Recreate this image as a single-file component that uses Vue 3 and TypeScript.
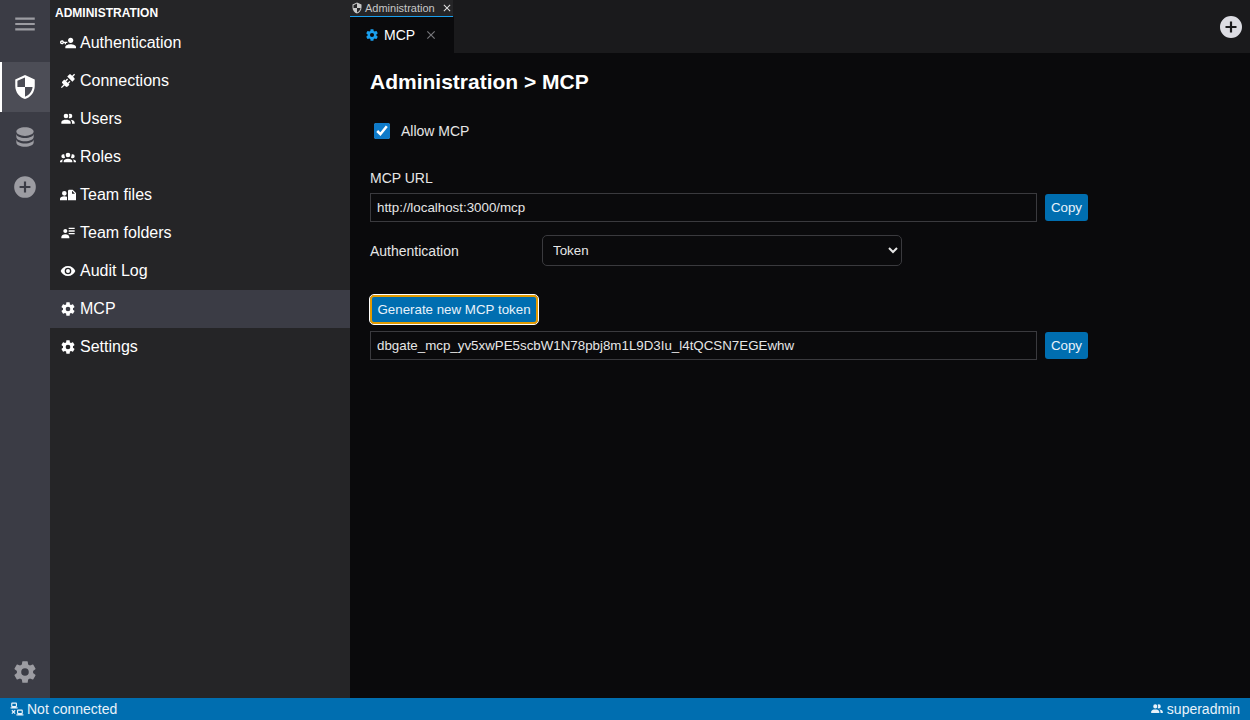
<script setup lang="ts">
const icons: Record<string, string> = {
  menu: 'M3,6H21V8H3V6M3,11H21V13H3V11M3,16H21V18H3V16Z',
  security: 'M12,12H19C18.47,16.11 15.72,19.78 12,20.92V12H5V6.3L12,3.19M12,1L3,5V11C3,16.55 6.84,21.73 12,23C17.16,21.73 21,16.55 21,11V5L12,1Z',
  database: 'M12,3C7.58,3 4,4.79 4,7C4,9.21 7.58,11 12,11C16.42,11 20,9.21 20,7C20,4.79 16.42,3 12,3M4,9V12C4,14.21 7.58,16 12,16C16.42,16 20,14.21 20,12V9C20,11.21 16.42,13 12,13C7.58,13 4,11.21 4,9M4,14V17C4,19.21 7.58,21 12,21C16.42,21 20,19.21 20,17V14C20,16.21 16.42,18 12,18C7.58,18 4,16.21 4,14Z',
  plus: 'M17,13H13V17H11V13H7V11H11V7H13V11H17M12,2A10,10 0 0,0 2,12A10,10 0 0,0 12,22A10,10 0 0,0 22,12A10,10 0 0,0 12,2Z',
  cog: 'M12,15.5A3.5,3.5 0 0,1 8.5,12A3.5,3.5 0 0,1 12,8.5A3.5,3.5 0 0,1 15.5,12A3.5,3.5 0 0,1 12,15.5M19.43,12.97C19.47,12.65 19.5,12.33 19.5,12C19.5,11.67 19.47,11.34 19.43,11L21.54,9.37C21.73,9.22 21.78,8.95 21.66,8.73L19.66,5.27C19.54,5.05 19.27,4.96 19.05,5.05L16.56,6.05C16.04,5.66 15.5,5.32 14.87,5.07L14.5,2.42C14.46,2.18 14.25,2 14,2H10C9.75,2 9.54,2.18 9.5,2.42L9.13,5.07C8.5,5.32 7.96,5.66 7.44,6.05L4.95,5.05C4.73,4.96 4.46,5.05 4.34,5.27L2.34,8.73C2.21,8.95 2.27,9.22 2.46,9.37L4.57,11C4.53,11.34 4.5,11.67 4.5,12C4.5,12.33 4.53,12.65 4.57,12.97L2.46,14.63C2.27,14.78 2.21,15.05 2.34,15.27L4.34,18.73C4.46,18.95 4.73,19.03 4.95,18.95L7.44,17.94C7.96,18.34 8.5,18.68 9.13,18.93L9.5,21.58C9.54,21.82 9.75,22 10,22H14C14.25,22 14.46,21.82 14.5,21.58L14.87,18.93C15.5,18.67 16.04,18.34 16.56,17.94L19.05,18.95C19.27,19.03 19.54,18.95 19.66,18.73L21.66,15.27C21.78,15.05 21.73,14.78 21.54,14.63L19.43,12.97Z',
  users: 'M16 17V19H2V17S2 13 9 13 16 17 16 17M12.5 7.5A3.5 3.5 0 1 0 9 11A3.5 3.5 0 0 0 12.5 7.5M15.94 13A5.32 5.32 0 0 1 18 17V19H22V17S22 13.37 15.94 13M15 4A3.39 3.39 0 0 0 13.07 4.59A5 5 0 0 1 13.07 10.41A3.39 3.39 0 0 0 15 11A3.5 3.5 0 0 0 15 4Z',
  group: 'M12,5.5A3.5,3.5 0 0,1 15.5,9A3.5,3.5 0 0,1 12,12.5A3.5,3.5 0 0,1 8.5,9A3.5,3.5 0 0,1 12,5.5M5,8C5.56,8 6.08,8.15 6.53,8.42C6.38,9.85 6.8,11.27 7.66,12.38C7.16,13.34 6.16,14 5,14A3,3 0 0,1 2,11A3,3 0 0,1 5,8M19,8A3,3 0 0,1 22,11A3,3 0 0,1 19,14C17.84,14 16.84,13.34 16.34,12.38C17.2,11.27 17.62,9.85 17.47,8.42C17.92,8.15 18.44,8 19,8M5.5,18.25C5.5,16.18 8.41,14.5 12,14.5C15.59,14.5 18.5,16.18 18.5,18.25V20H5.5V18.25M0,20V18.5C0,17.11 1.89,15.94 4.45,15.6C3.86,16.28 3.5,17.22 3.5,18.25V20H0M24,20H20.5V18.25C20.5,17.22 20.14,16.28 19.55,15.6C22.11,15.94 24,17.11 24,18.5V20Z',
  eye: 'M12,9A3,3 0 0,0 9,12A3,3 0 0,0 12,15A3,3 0 0,0 15,12A3,3 0 0,0 12,9M12,17A5,5 0 0,1 7,12A5,5 0 0,1 12,7A5,5 0 0,1 17,12A5,5 0 0,1 12,17M12,4.5C7,4.5 2.73,7.61 1,12C2.73,16.39 7,19.5 12,19.5C17,19.5 21.27,16.39 23,12C21.27,7.61 17,4.5 12,4.5Z',
  key: 'M11 10V12H9V14H7V12H5.8C5.4 13.2 4.3 14 3 14C1.3 14 0 12.7 0 11S1.3 8 3 8C4.3 8 5.4 8.8 5.8 10H11M3 10C2.4 10 2 10.4 2 11S2.4 12 3 12 4 11.6 4 11 3.6 10 3 10M16 14C18.7 14 24 15.3 24 18V20H8V18C8 15.3 13.3 14 16 14M16 12C13.8 12 12 10.2 12 8S13.8 4 16 4 20 5.8 20 8 18.2 12 16 12Z',
  connection: 'M21.4 7.5C22.2 8.3 22.2 9.6 21.4 10.3L18.6 13.1L10.8 5.3L13.6 2.5C14.4 1.7 15.7 1.7 16.4 2.5L18.2 4.3L21.2 1.3L22.6 2.7L19.6 5.7L21.4 7.5M15.6 13.3L14.2 11.9L11.4 14.7L9.3 12.6L12.1 9.8L10.7 8.4L7.9 11.2L6.4 9.8L3.6 12.6C2.8 13.4 2.8 14.7 3.6 15.4L5.4 17.2L1.4 21.2L2.8 22.6L6.8 18.6L8.6 20.4C9.4 21.2 10.7 21.2 11.4 20.4L14.2 17.6L12.8 16.2L15.6 13.3Z',
  teamFile: 'M6.5 6A3.5 3.5 0 1 1 6.5 13A3.5 3.5 0 0 1 6.5 6M0 20V17.5C0 15.5 3 14 6.5 14C8 14 9.4 14.3 10.5 14.8V20H0M14 4H19L24 9V20H12V6C12 4.9 12.9 4 14 4M18 5.5V10H22.5L18 5.5Z',
  details: 'M11 9C11 10.66 9.66 12 8 12C6.34 12 5 10.66 5 9C5 7.34 6.34 6 8 6C9.66 6 11 7.34 11 9M14 20H2V18C2 15.79 4.69 14 8 14C11.31 14 14 15.79 14 18M22 12V14H13V12M22 8V10H13V8M22 4V6H13V4Z',
  lan: 'M4,1C2.89,1 2,1.89 2,3V7C2,8.11 2.89,9 4,9H1V11H13V9H10C11.11,9 12,8.11 12,7V3C12,1.89 11.11,1 10,1H4M4,3H10V7H4V3M14,13C12.89,13 12,13.89 12,15V19C12,20.11 12.89,21 14,21H11V23H23V21H20C21.11,21 22,20.11 22,19V15C22,13.89 21.11,13 20,13H14M3.88,13.46L2.46,14.88L4.59,17L2.46,19.12L3.88,20.54L6,18.41L8.12,20.54L9.54,19.12L7.41,17L9.54,14.88L8.12,13.46L6,15.59L3.88,13.46M14,15H20V19H14V15Z',
  close: 'M19,6.41L17.59,5L12,10.59L6.41,5L5,6.41L10.59,12L5,17.59L6.41,19L12,13.41L17.59,19L19,17.59L13.41,12L19,6.41Z',
}

const menu = [
  { label: 'Authentication', icon: 'key' },
  { label: 'Connections', icon: 'connection' },
  { label: 'Users', icon: 'users' },
  { label: 'Roles', icon: 'group' },
  { label: 'Team files', icon: 'teamFile' },
  { label: 'Team folders', icon: 'details' },
  { label: 'Audit Log', icon: 'eye' },
  { label: 'MCP', icon: 'cog', active: true },
  { label: 'Settings', icon: 'cog' },
]
</script>

<template>
  <div class="app">
    <div class="workspace">
      <nav class="widget-bar">
        <button class="widget menu-btn">
          <svg viewBox="0 0 24 24" width="26" height="26"><path :d="icons.menu" /></svg>
        </button>
        <button class="widget selected">
          <svg viewBox="0 0 24 24" width="26" height="26"><path :d="icons.security" /></svg>
        </button>
        <button class="widget">
          <svg viewBox="0 0 24 24" width="26" height="26"><path :d="icons.database" /></svg>
        </button>
        <button class="widget">
          <svg viewBox="0 0 24 24" width="26" height="26"><path :d="icons.plus" /></svg>
        </button>
        <button class="widget settings-btn">
          <svg viewBox="0 0 24 24" width="26" height="26"><path :d="icons.cog" /></svg>
        </button>
      </nav>

      <aside class="sidebar">
        <div class="sidebar-title">ADMINISTRATION</div>
        <div
          v-for="item in menu"
          :key="item.label"
          class="sidebar-item"
          :class="{ active: item.active }"
        >
          <svg viewBox="0 0 24 24" width="16" height="16"><path :d="icons[item.icon]" /></svg>
          <span>{{ item.label }}</span>
        </div>
      </aside>

      <main class="main">
        <header class="tabs">
          <div class="tab-rows">
            <div class="tab-group">
              <div class="group-tab">
                <svg viewBox="0 0 24 24" width="12" height="12"><path :d="icons.security" /></svg>
                <span>Administration</span>
                <svg class="group-close" viewBox="0 0 24 24" width="12" height="12"><path :d="icons.close" /></svg>
              </div>
            </div>
            <div class="tab-row">
              <div class="tab">
                <svg class="tab-icon" viewBox="0 0 24 24" width="14" height="14"><path :d="icons.cog" /></svg>
                <span>MCP</span>
                <svg class="tab-close" viewBox="0 0 24 24" width="14" height="14"><path :d="icons.close" /></svg>
              </div>
            </div>
          </div>
          <svg class="add-tab" viewBox="2 2 20 20" width="22" height="22"><path :d="icons.plus" /></svg>
        </header>

        <section class="content">
          <h1>Administration &gt; MCP</h1>

          <label class="check-row">
            <input type="checkbox" checked />
            <span>Allow MCP</span>
          </label>

          <div class="field-label">MCP URL</div>
          <div class="input-row">
            <input class="text-input" type="text" value="http://localhost:3000/mcp" />
            <button class="btn">Copy</button>
          </div>

          <div class="select-row">
            <label>Authentication</label>
            <select class="select">
              <option>Token</option>
            </select>
          </div>

          <button class="btn generate">Generate new MCP token</button>

          <div class="input-row">
            <input class="text-input" type="text" value="dbgate_mcp_yv5xwPE5scbW1N78pbj8m1L9D3Iu_l4tQCSN7EGEwhw" />
            <button class="btn">Copy</button>
          </div>
        </section>
      </main>
    </div>

    <footer class="statusbar">
      <div class="status-item">
        <svg viewBox="0 0 24 24" width="14" height="14"><path :d="icons.lan" /></svg>
        <span>Not connected</span>
      </div>
      <div class="status-item">
        <svg viewBox="0 0 24 24" width="14" height="14"><path :d="icons.users" /></svg>
        <span>superadmin</span>
      </div>
    </footer>
  </div>
</template>

<style scoped>
.app {
  display: flex;
  flex-direction: column;
  height: 100vh;
  overflow: hidden;
  font-family: "Liberation Sans", Arial, sans-serif;
  font-size: 13px;
  color: #e6e6e6;
  background: #0a0a0c;
}

svg {
  display: block;
  fill: currentColor;
  flex: none;
}

.workspace {
  flex: 1;
  display: flex;
  min-height: 0;
}

.widget-bar {
  width: 50px;
  flex: none;
  display: flex;
  flex-direction: column;
  background: #3b3c45;
}

.widget {
  height: 50px;
  flex: none;
  display: flex;
  align-items: center;
  justify-content: center;
  padding: 0;
  border: 0;
  background: transparent;
  color: #9c9ca2;
}

.menu-btn {
  height: 48px;
  margin-bottom: 14px;
}

.selected {
  background: #4c4d56;
  color: #ffffff;
  box-shadow: inset 2px 0 0 #ffffff;
}

.settings-btn {
  margin-top: auto;
  margin-bottom: 1px;
}

.sidebar {
  width: 300px;
  flex: none;
  background: #252527;
  color: #ffffff;
}

.sidebar-title {
  height: 24px;
  padding: 1px 5px 0;
  box-sizing: border-box;
  font-size: 12px;
  font-weight: bold;
  line-height: 24px;
}

.sidebar-item {
  height: 38px;
  display: flex;
  align-items: center;
  gap: 4px;
  padding-left: 10px;
  font-size: 16px;
}

.sidebar-item.active {
  background: #3b3c45;
}

.main {
  flex: 1;
  min-width: 0;
  display: flex;
  flex-direction: column;
}

.tabs {
  display: flex;
  align-items: center;
  background: #1a1a1c;
}

.tab-rows {
  flex: 1;
}

.tab-group {
  height: 17px;
}

.group-tab {
  width: 103px;
  height: 17px;
  box-sizing: border-box;
  display: flex;
  align-items: center;
  padding-left: 1px;
  gap: 2px;
  font-size: 11px;
  color: #c8c8c8;
  background: #252527;
  border-bottom: 1px solid #1a9fee;
}

.group-close {
  margin-left: 4px;
  color: #e0e0e0;
}

.tab-row {
  height: 36px;
}

.tab {
  width: 104px;
  height: 36px;
  box-sizing: border-box;
  display: flex;
  align-items: center;
  padding-left: 15px;
  font-size: 14px;
  color: #ffffff;
  background: #0a0a0c;
}

.tab-icon {
  color: #1a9fee;
  margin-right: 5px;
}

.tab-close {
  margin-left: 9px;
  color: #77777b;
}

.add-tab {
  margin-right: 8px;
  color: #dcdce2;
}

.content {
  flex: 1;
  padding: 0 20px;
  background: #0a0a0c;
  font-size: 14px;
}

h1 {
  margin: 16px 0 0;
  font-size: 21px;
  line-height: 26px;
  font-weight: bold;
  color: #ffffff;
}

.check-row {
  display: flex;
  align-items: center;
  height: 20px;
  margin-top: 26px;
  padding-left: 4px;
  color: #e6e6e6;
}

.check-row input {
  width: 16px;
  height: 16px;
  margin: 0 11px 0 0;
  accent-color: #0e7ac9;
  color-scheme: dark;
}

.field-label {
  margin-top: 29px;
  line-height: 16px;
}

.input-row {
  display: flex;
  align-items: center;
  gap: 8px;
  margin-top: 7px;
  width: 718px;
}

.text-input {
  flex: 1;
  min-width: 0;
  height: 29px;
  box-sizing: border-box;
  padding: 0 6px;
  border: 1px solid #3a3a3e;
  border-radius: 0;
  background: #0a0a0c;
  color: #e6e6e6;
  font: 13.33px "Liberation Sans", Arial, sans-serif;
  outline: none;
}

.btn {
  height: 27px;
  padding: 0 6px;
  border: 0;
  border-radius: 3px;
  background: #006eb0;
  color: #e8f2fa;
  font: 13.33px "Liberation Sans", Arial, sans-serif;
}

.select-row {
  display: flex;
  align-items: center;
  margin-top: 13px;
}

.select-row label {
  width: 172px;
}

.select {
  width: 360px;
  height: 31px;
  padding: 0 6px;
  border: 1px solid #3a3a3e;
  border-radius: 5px;
  background: #0a0a0c;
  color: #e6e6e6;
  color-scheme: dark;
  font: 13.33px "Liberation Sans", Arial, sans-serif;
}

.generate {
  display: block;
  width: 168px;
  height: 29px;
  margin: 29px 0 3px;
  padding: 0;
  border: 2px solid #e39b00;
  outline: 1px solid #ffffff;
  outline-offset: 0;
  border-radius: 4px;
}

.statusbar {
  height: 22px;
  flex: none;
  display: flex;
  align-items: center;
  justify-content: space-between;
  padding: 0 10px;
  background: #006eb0;
  color: #e8f2fa;
  font-size: 14px;
}

.status-item {
  display: flex;
  align-items: center;
  gap: 3px;
}
</style>
